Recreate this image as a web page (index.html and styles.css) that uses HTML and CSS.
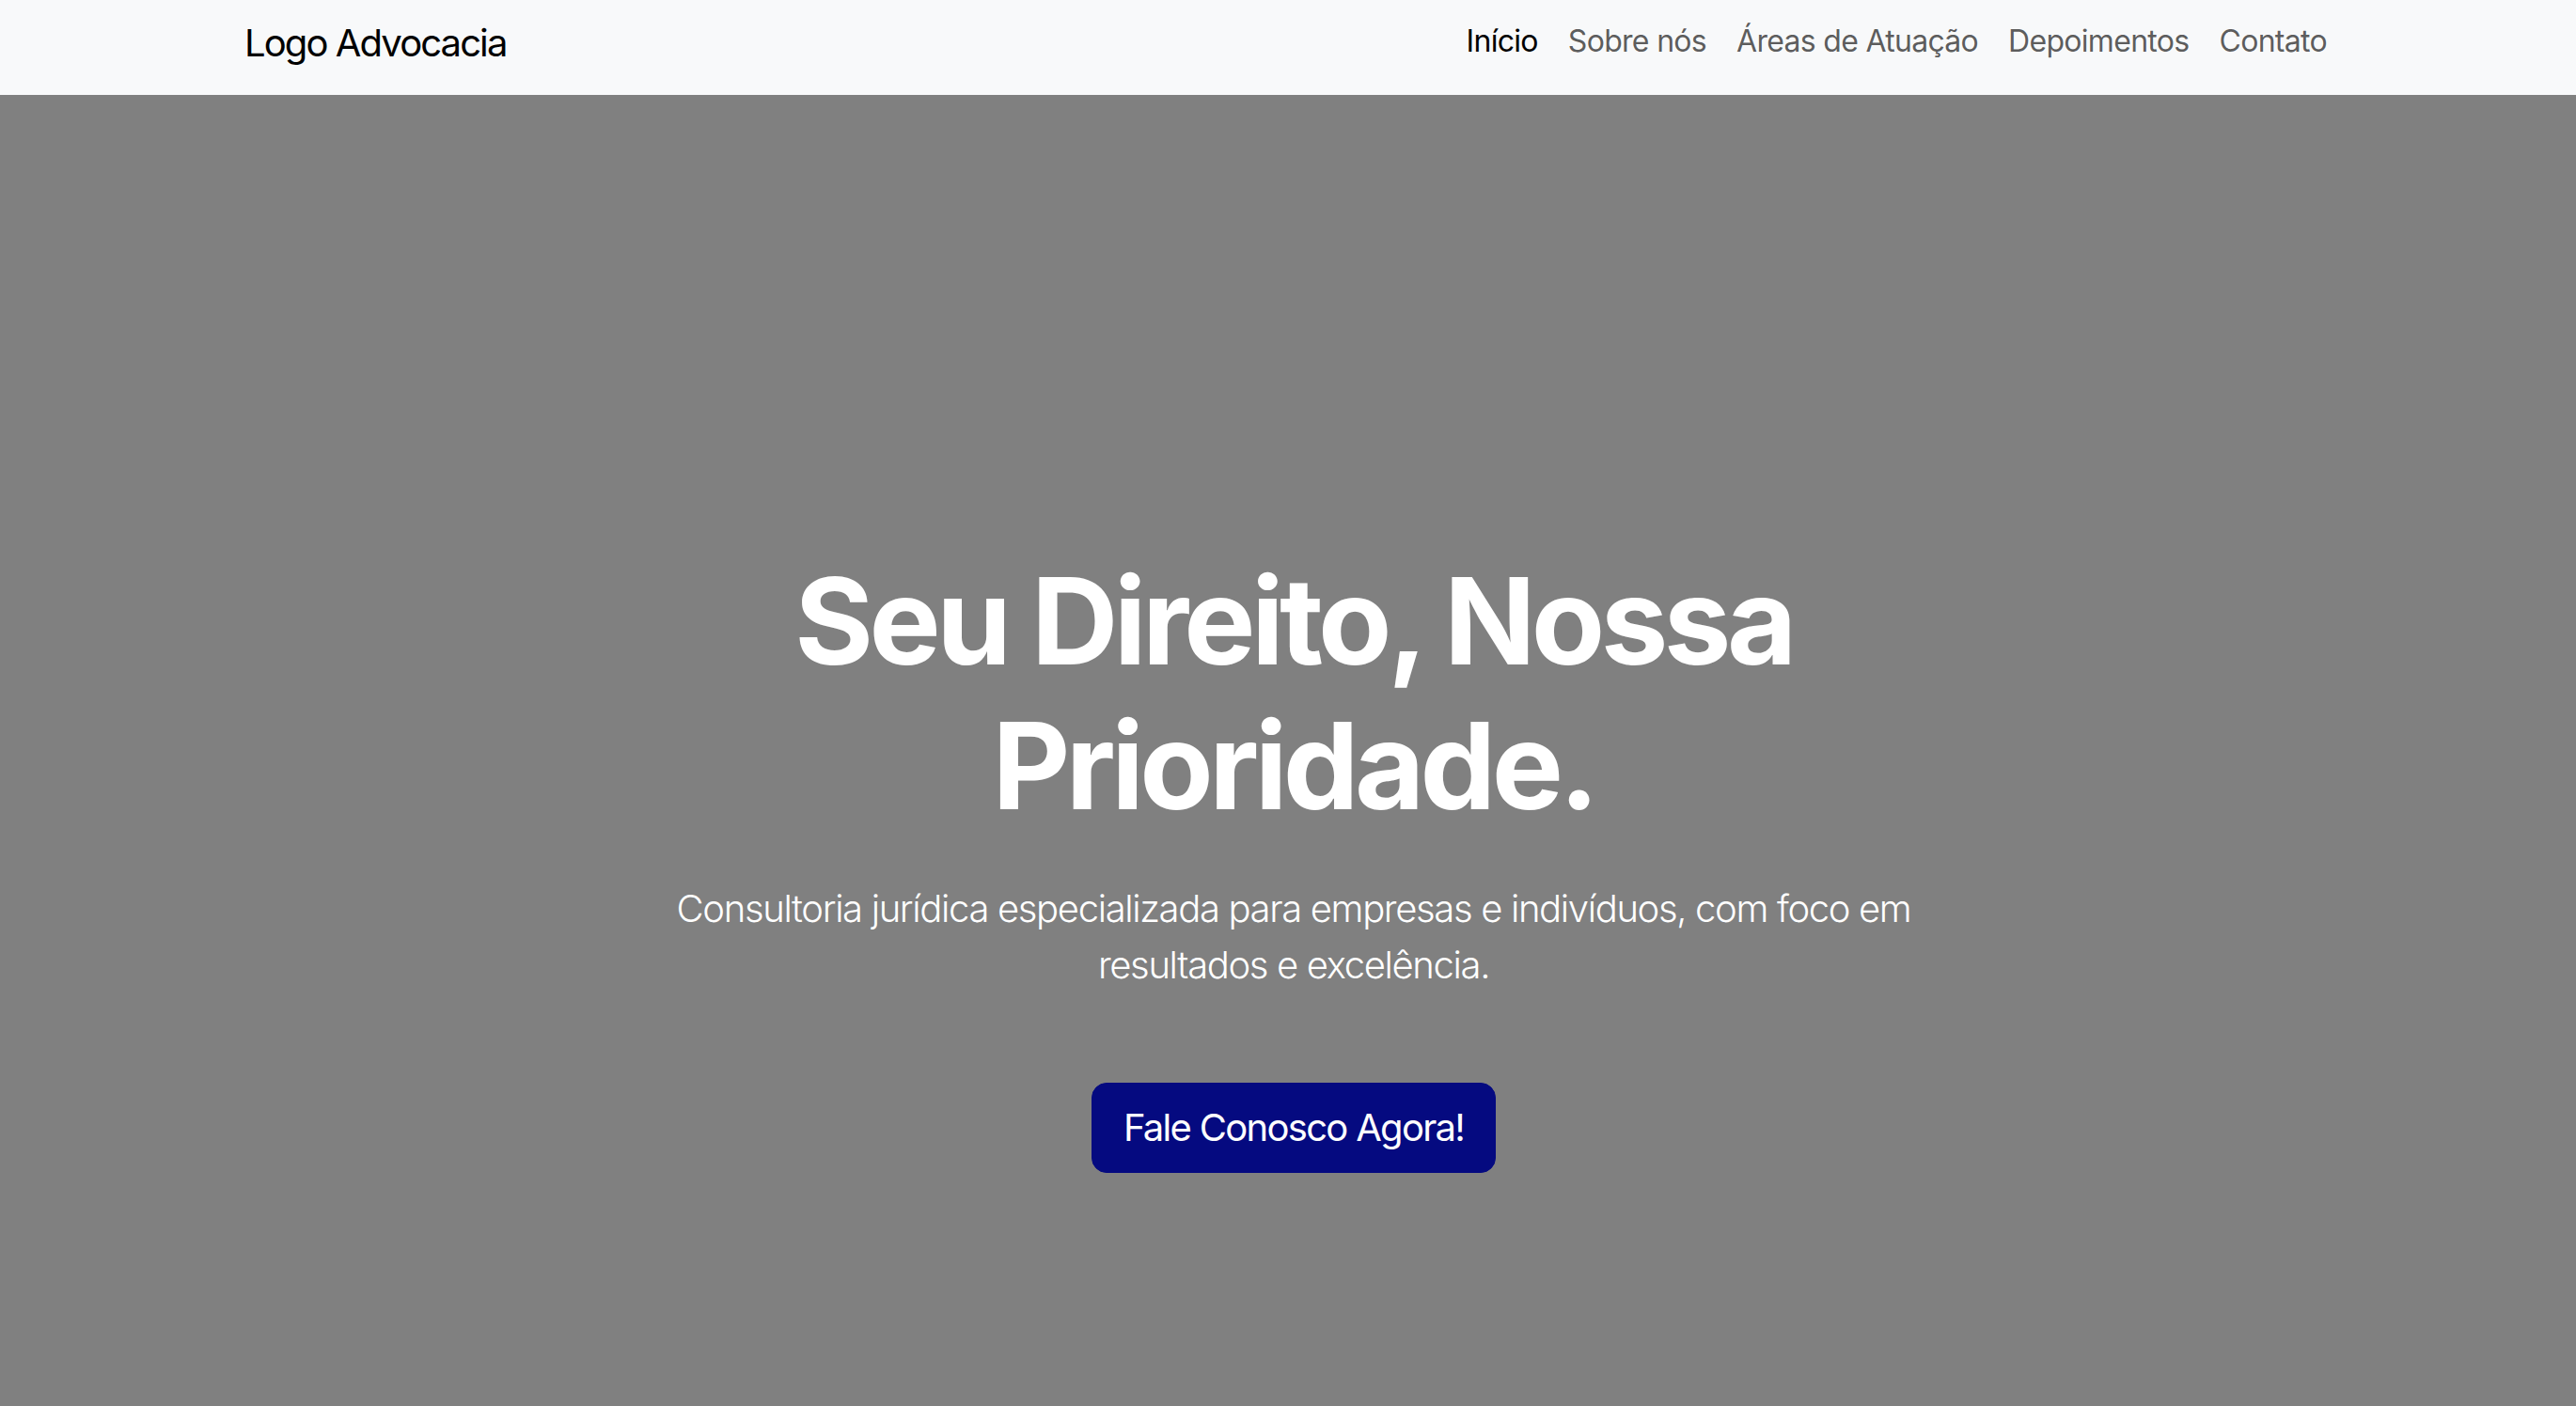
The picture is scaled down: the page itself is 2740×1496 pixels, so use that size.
FILE: index.html
```html
<!DOCTYPE html>
<html lang="pt-BR">
<head>
<meta charset="utf-8">
<title>Advocacia</title>
<link rel="stylesheet" href="styles.css">
</head>
<body>
<header class="navbar">
  <div class="nav-inner">
    <a class="brand" href="#">Logo Advocacia</a>
    <ul class="nav-links">
      <li><a class="nav-link active" href="#">Início</a></li>
      <li><a class="nav-link" href="#">Sobre nós</a></li>
      <li><a class="nav-link" href="#">Áreas de Atuação</a></li>
      <li><a class="nav-link" href="#">Depoimentos</a></li>
      <li><a class="nav-link" href="#">Contato</a></li>
    </ul>
  </div>
</header>
<section class="hero">
  <div class="hero-content">
    <h1 class="hero-title">Seu Direito, Nossa Prioridade.</h1>
    <p class="hero-lead">Consultoria jurídica especializada para empresas e indivíduos, com foco em resultados e excelência.</p>
    <a class="btn-cta" href="#">Fale Conosco Agora!</a>
  </div>
</section>
</body>
</html>
```
FILE: styles.css
```css
* { box-sizing: border-box; }
html, body {
  margin: 0;
  padding: 0;
  font-family: Inter, "Noto Sans", "Liberation Sans", sans-serif;
  background: #808080;
}
a { text-decoration: none; }

.navbar {
  background: #f8f9fa;
  height: 101px;
}
.nav-inner {
  height: 100%;
  padding: 0 249px 0 260px;
  display: flex;
  align-items: flex-start;
  justify-content: space-between;
}
.brand {
  color: #000;
  font-size: 40px;
  line-height: 48px;
  margin-top: 22px;
  letter-spacing: -1.9px;
}
.nav-links {
  list-style: none;
  margin: 20px 0 0;
  padding: 0;
  display: flex;
}
.nav-link {
  display: block;
  padding: 0 16px;
  font-size: 32px;
  line-height: 48px;
  letter-spacing: -0.7px;
  color: rgba(0, 0, 0, 0.65);
}
.nav-link.active { color: #000; }

.hero {
  min-height: 1395px;
  background: #808080;
  display: flex;
  justify-content: center;
  padding: 483px 0 0 12px;
}
.hero-content {
  max-width: 1400px;
  text-align: center;
  color: #fff;
  display: flex;
  flex-direction: column;
  align-items: center;
}
.hero-title {
  margin: 0;
  font-size: 128px;
  line-height: 153.6px;
  font-weight: 700;
  letter-spacing: -4.6px;
}
.hero-lead {
  margin: 46px 0 0;
  font-size: 40px;
  line-height: 60px;
  font-weight: 300;
  letter-spacing: -1.35px;
}
.btn-cta {
  margin-top: 95px;
  display: inline-block;
  background: #050a80;
  color: #fff;
  font-size: 40px;
  line-height: 60px;
  padding: 17px 33px;
  border-radius: 16px;
  border: 1px solid #050a80;
  letter-spacing: -1.7px;
}
```
